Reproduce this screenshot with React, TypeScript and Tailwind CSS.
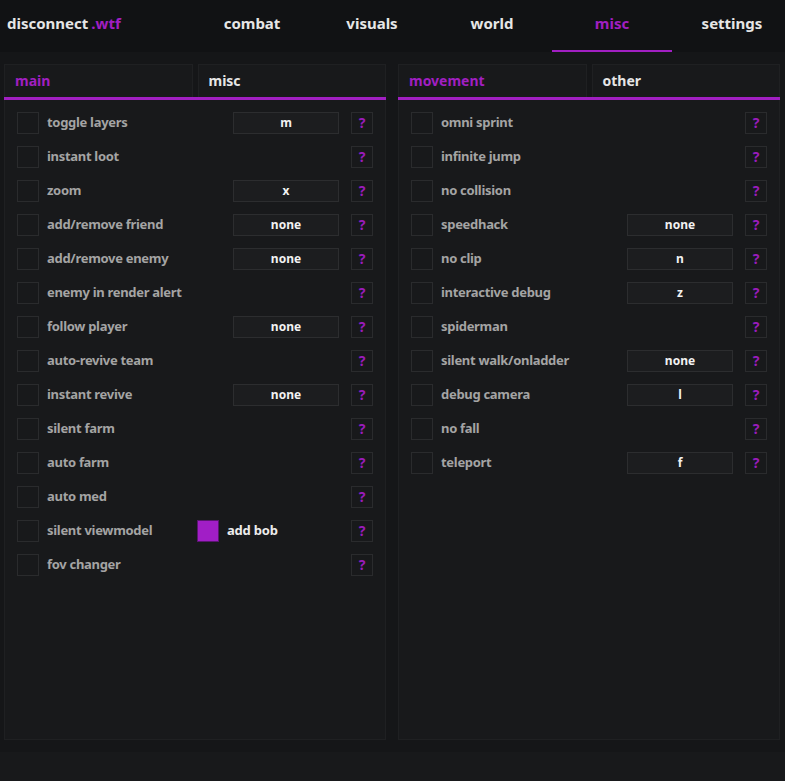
import { useState } from "react";

type Row = {
  label: string;
  bind?: string;
  color?: boolean;
};

const mainRows: Row[] = [
  { label: "toggle layers", bind: "m" },
  { label: "instant loot" },
  { label: "zoom", bind: "x" },
  { label: "add/remove friend", bind: "none" },
  { label: "add/remove enemy", bind: "none" },
  { label: "enemy in render alert" },
  { label: "follow player", bind: "none" },
  { label: "auto-revive team" },
  { label: "instant revive", bind: "none" },
  { label: "silent farm" },
  { label: "auto farm" },
  { label: "auto med" },
  { label: "silent viewmodel", color: true },
  { label: "fov changer" },
];

const movementRows: Row[] = [
  { label: "omni sprint" },
  { label: "infinite jump" },
  { label: "no collision" },
  { label: "speedhack", bind: "none" },
  { label: "no clip", bind: "n" },
  { label: "interactive debug", bind: "z" },
  { label: "spiderman" },
  { label: "silent walk/onladder", bind: "none" },
  { label: "debug camera", bind: "l" },
  { label: "no fall" },
  { label: "teleport", bind: "f" },
];

const tabs = ["combat", "visuals", "world", "misc", "settings"];

const OptionRow = ({ row }: { row: Row }) => {
  const [on, setOn] = useState(false);

  return (
    <div className="flex items-center h-[22px]">
      <button
        onClick={() => setOn(!on)}
        className={`w-[22px] h-[22px] shrink-0 border border-[#2a2b2d] ${on ? "bg-[#a11fc2]" : "bg-[#18191b]"}`}
      />
      <span className="flex-1 ml-2 text-[13px] tracking-[-0.3px] font-bold text-[#a4a4a4] whitespace-nowrap">
        {row.label}
      </span>
      {row.bind && (
        <div className="w-[106px] h-[22px] flex items-center justify-center bg-[#1c1d1f] border border-[#2c2d2f] text-[12px] font-bold text-[#f2f2f2]">
          {row.bind}
        </div>
      )}
      {row.color && (
        <div className="w-[142px] flex items-center">
          <div className="w-[22px] h-[22px] bg-[#a11ec6] border border-[#5a1570]" />
          <span className="ml-2 text-[13px] tracking-[-0.2px] font-bold text-[#ececec]">add bob</span>
        </div>
      )}
      <div className="ml-3 w-[22px] h-[22px] shrink-0 flex items-center justify-center pb-[2px] border border-[#2a2b2d] text-[14px] font-bold text-[#9a1cbb]">
        ?
      </div>
    </div>
  );
};

const Panel = ({ tabsLeft, tabsRight, rows }: { tabsLeft: string; tabsRight: string; rows: Row[] }) => {
  return (
    <div className="flex flex-col w-[382px]">
      <div className="flex gap-[5px] h-[33px]">
        <div className="flex-1 flex items-center px-[10px] pb-[2px] bg-[#18191b] border border-b-0 border-[#1f2022] text-[14px] font-bold text-[#a11fc2]">
          {tabsLeft}
        </div>
        <div className="flex-1 flex items-center px-[10px] pb-[2px] bg-[#18191b] border border-b-0 border-[#1f2022] text-[14px] font-bold text-[#e6e6e6]">
          {tabsRight}
        </div>
      </div>
      <div className="h-[3px] bg-[#a11fc2]" />
      <div className="flex-1 flex flex-col gap-3 pt-3 px-3 bg-[#18191b] border border-t-0 border-[#1f2022]">
        {rows.map((row) => (
          <OptionRow key={row.label} row={row} />
        ))}
      </div>
    </div>
  );
};

export default function App() {
  const [active, setActive] = useState("misc");

  return (
    <div className="w-[785px] h-[781px] overflow-hidden bg-[#18191b] font-['Noto_Sans',sans-serif]">
      <div className="flex h-[52px] bg-[#111214]">
        <div className="w-[192px] shrink-0 flex items-center pl-[7px] pb-[5px] text-[15px] font-bold text-[#e6e6e6]">
          disconnect<span className="ml-[3px] text-[#a11fc2]">.wtf</span>
        </div>
        {tabs.map((tab) => (
          <button
            key={tab}
            onClick={() => setActive(tab)}
            className={`w-[120px] shrink-0 h-full flex items-center justify-center pb-[3px] text-[15px] font-bold border-b-2 ${
              active == tab ? "text-[#a11fc2] border-[#a11fc2]" : "text-[#e6e6e6] border-transparent"
            }`}
          >
            {tab}
          </button>
        ))}
      </div>
      <div className="flex gap-3 h-[700px] py-3 pl-1 bg-[#151618]">
        <Panel tabsLeft="main" tabsRight="misc" rows={mainRows} />
        <Panel tabsLeft="movement" tabsRight="other" rows={movementRows} />
      </div>
    </div>
  );
}
